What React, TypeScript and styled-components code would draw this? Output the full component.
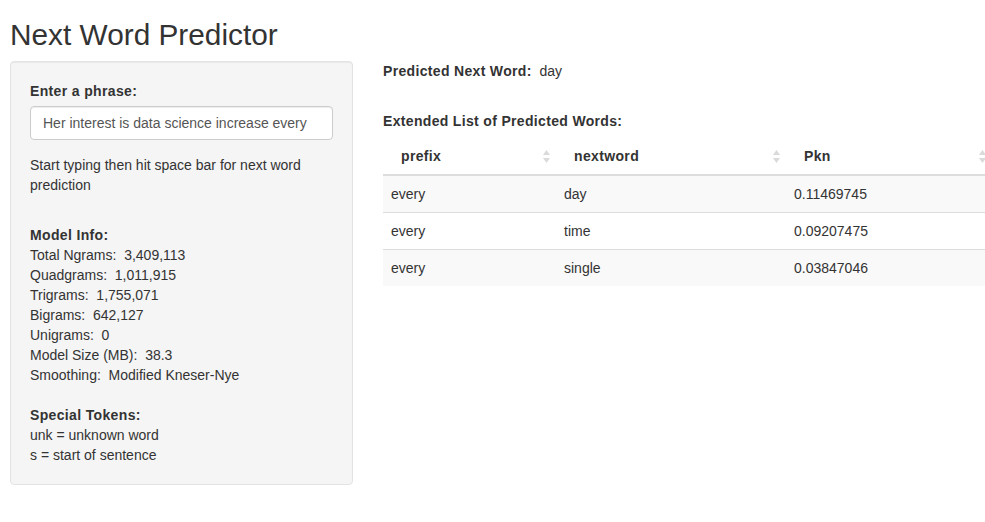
import React from "react";
import styled, { createGlobalStyle } from "styled-components";

const GlobalStyle = createGlobalStyle`
  html, body {
    margin: 0;
    padding: 0;
    overflow: hidden;
    background: #ffffff;
  }
  body {
    font-family: "Liberation Sans", Arial, Helvetica, sans-serif;
    font-size: 14px;
    line-height: 20px;
    color: #333333;
  }
  * { box-sizing: border-box; }
`;

const Page = styled.div`
  padding: 0 10px;
  width: 1010px;
`;

const Title = styled.h2`
  margin: 18px 0 10px;
  font-size: 29.8px;
  font-weight: 500;
  line-height: 33px;
`;

const Row = styled.div`
  display: flex;
  align-items: flex-start;
  gap: 30px;
`;

const Well = styled.div`
  width: 343px;
  flex: none;
  padding: 19px;
  background: #f5f5f5;
  border: 1px solid #e3e3e3;
  border-radius: 4px;
  box-shadow: inset 0 1px 1px rgba(0, 0, 0, 0.05);
`;

const Label = styled.label`
  display: block;
  font-weight: 700;
  letter-spacing: 0.35px;
  margin-bottom: 5px;
`;

const Input = styled.input`
  display: block;
  width: 100%;
  height: 34px;
  padding: 6px 12px;
  font-family: inherit;
  font-size: 14px;
  line-height: 20px;
  color: #555555;
  background: #ffffff;
  border: 1px solid #cccccc;
  border-radius: 4px;
  box-shadow: inset 0 1px 1px rgba(0, 0, 0, 0.075);
  outline: none;
  margin-bottom: 15px;
`;

const Help = styled.p`
  margin: 0;
`;

const Section = styled.div<{ $gap: number }>`
  margin-top: ${(p) => p.$gap}px;
`;

const Heading = styled.div`
  font-weight: 700;
  letter-spacing: 0.35px;
`;

const Line = styled.div`
  white-space: pre;
`;

const Main = styled.div`
  width: 609px;
  flex: none;
`;

const Pair = styled.div<{ $gap?: number }>`
  white-space: pre;
  margin-bottom: ${(p) => p.$gap ?? 0}px;
`;

const Strong = styled.span`
  font-weight: 700;
  letter-spacing: 0.33px;
`;

const Table = styled.table`
  width: 609px;
  border-collapse: separate;
  border-spacing: 0;
  table-layout: fixed;
`;

const Th = styled.th<{ $w: number }>`
  width: ${(p) => p.$w}px;
  padding: 10px 6px 8px 18px;
  text-align: left;
  font-weight: 700;
  letter-spacing: 0.35px;
  border-bottom: 2px solid #dddddd;
`;

const ThInner = styled.div`
  display: flex;
  align-items: center;
  justify-content: space-between;
`;

const Tr = styled.tr<{ $striped: boolean }>`
  background: ${(p) => (p.$striped ? "#f9f9f9" : "#ffffff")};
`;

const Td = styled.td<{ $ruled: boolean }>`
  box-sizing: content-box;
  height: 20px;
  padding: 8px;
  line-height: 20px;
  border-top: ${(p) => (p.$ruled ? "1px solid #dddddd" : "0")};
`;

const SortIcon = () => (
  <svg width="7" height="13" viewBox="0 0 7 13" aria-hidden="true">
    <path d="M3.5 0 L7 5 L0 5 Z" fill="#dadada" />
    <path d="M0 8 L7 8 L3.5 13 Z" fill="#dadada" />
  </svg>
);

const columns = [
  { name: "prefix", width: 173 },
  { name: "nextword", width: 230 },
  { name: "Pkn", width: 206 },
];

const rows = [
  ["every", "day", "0.11469745"],
  ["every", "time", "0.09207475"],
  ["every", "single", "0.03847046"],
];

const info = [
  "Total Ngrams:  3,409,113",
  "Quadgrams:  1,011,915",
  "Trigrams:  1,755,071",
  "Bigrams:  642,127",
  "Unigrams:  0",
  "Model Size (MB):  38.3",
  "Smoothing:  Modified Kneser-Nye",
];

export default function App() {
  return (
    <>
      <GlobalStyle />
      <Page>
        <Title>Next Word Predictor</Title>
        <Row>
          <Well>
            <Label htmlFor="phrase">Enter a phrase:</Label>
            <Input
              id="phrase"
              type="text"
              defaultValue="Her interest is data science increase every"
            />
            <Help>Start typing then hit space bar for next word prediction</Help>
            <Section $gap={30}>
              <Heading>Model Info:</Heading>
              {info.map((l) => (
                <Line key={l}>{l}</Line>
              ))}
            </Section>
            <Section $gap={20}>
              <Heading>Special Tokens:</Heading>
              <Line>unk = unknown word</Line>
              <Line>s = start of sentence</Line>
            </Section>
          </Well>
          <Main>
            <Pair $gap={30}>
              <Strong>Predicted Next Word:</Strong>{"  day"}
            </Pair>
            <Pair $gap={5}>
              <Strong>Extended List of Predicted Words:</Strong>
            </Pair>
            <Table>
              <thead>
                <tr>
                  {columns.map((c) => (
                    <Th key={c.name} $w={c.width}>
                      <ThInner>
                        <span>{c.name}</span>
                        <SortIcon />
                      </ThInner>
                    </Th>
                  ))}
                </tr>
              </thead>
              <tbody>
                {rows.map((r, i) => (
                  <Tr key={i} $striped={i % 2 === 0}>
                    {r.map((v, j) => (
                      <Td key={j} $ruled={i > 0}>
                        {v}
                      </Td>
                    ))}
                  </Tr>
                ))}
              </tbody>
            </Table>
          </Main>
        </Row>
      </Page>
    </>
  );
}
